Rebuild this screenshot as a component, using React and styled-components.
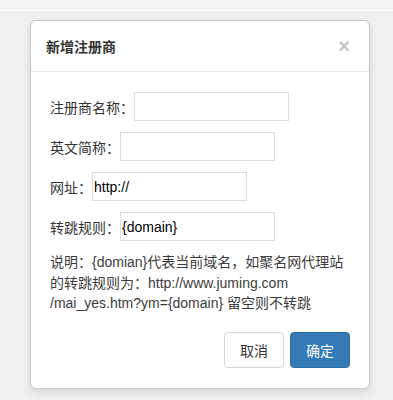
import React, { useState } from 'react'
import styled, { createGlobalStyle } from 'styled-components'

const GlobalStyle = createGlobalStyle`
  html, body {
    margin: 0;
    padding: 0;
    background: #f0f0f0;
    font-family: "Liberation Sans", "Noto Sans CJK SC", sans-serif;
    font-size: 14px;
    color: #333;
  }
`

const Page = styled.div`
  width: 393px;
  height: 400px;
  display: flex;
  flex-direction: column;
  overflow: hidden;
`

const TopStrip = styled.div`
  height: 10px;
  background: #f4f4f4;
  border-bottom: 1px solid #fbfbfb;
`

const Overlay = styled.div`
  flex: 1;
  padding: 9px 23px 0 30px;
`

const Modal = styled.div`
  width: 338px;
  background: #fff;
  border: 1px solid #c8c8c8;
  border-radius: 6px;
  box-shadow: 0 3px 9px rgba(0, 0, 0, 0.12);
`

const Header = styled.div`
  height: 50px;
  display: flex;
  align-items: center;
  justify-content: space-between;
  padding: 0 19px 0 15px;
  border-bottom: 1px solid #e5e5e5;
`

const Title = styled.h4`
  margin: 0;
  font-size: 14px;
  font-weight: bold;
  color: #333;
`

const Close = styled.button`
  border: 0;
  background: none;
  padding: 0;
  font-family: "Liberation Sans", sans-serif;
  font-size: 20px;
  font-weight: bold;
  line-height: 1;
  color: #c4c4c4;
  cursor: pointer;
`

const Body = styled.div`
  padding: 20px 19px 0 19px;
`

const Row = styled.div`
  display: flex;
  align-items: center;
  margin-bottom: 11px;
`

const Label = styled.label`
  white-space: nowrap;
  color: #333;
`

const Input = styled.input`
  box-sizing: border-box;
  width: 155px;
  height: 29px;
  padding: 1px 1px;
  border: 1px solid #dcdcdc;
  font-family: "Liberation Sans", "Noto Sans CJK SC", sans-serif;
  font-size: 14px;
  color: #000;
  outline: none;
`

const Note = styled.p`
  margin: 0;
  line-height: 20.5px;
  color: #3c3c3c;
  white-space: nowrap;
`

const Footer = styled.div`
  display: flex;
  justify-content: flex-end;
  gap: 6px;
  padding: 18px 19px 20px;
`

const Button = styled.button`
  box-sizing: border-box;
  height: 36px;
  padding: 0 15px;
  border-radius: 4px;
  font-family: "Liberation Sans", "Noto Sans CJK SC", sans-serif;
  font-size: 14px;
  cursor: pointer;
  border: 1px solid ${p => (p.$primary ? '#2e6da4' : '#d6d6d6')};
  background: ${p => (p.$primary ? '#337ab7' : '#fff')};
  color: ${p => (p.$primary ? '#fff' : '#333')};
`

const fields = [
  { label: '注册商名称：', value: '' },
  { label: '英文简称：', value: '' },
  { label: '网址：', value: 'http://' },
  { label: '转跳规则：', value: '{domain}' },
]

export default function App() {
  const [values, setValues] = useState(fields.map(f => f.value))

  const change = (i, v) => {
    const next = [...values]
    next[i] = v
    setValues(next)
  }

  return (
    <Page>
      <GlobalStyle />
      <TopStrip />
      <Overlay>
        <Modal>
          <Header>
            <Title>新增注册商</Title>
            <Close>×</Close>
          </Header>
          <Body>
            {fields.map((f, i) => (
              <Row key={f.label}>
                <Label>{f.label}</Label>
                <Input value={values[i]} onChange={e => change(i, e.target.value)} />
              </Row>
            ))}
            <Note>
              说明：{'{domian}'}代表当前域名，如聚名网代理站<br />
              的转跳规则为：http://www.juming.com<br />
              /mai_yes.htm?ym={'{domain}'} 留空则不转跳
            </Note>
          </Body>
          <Footer>
            <Button>取消</Button>
            <Button $primary>确定</Button>
          </Footer>
        </Modal>
      </Overlay>
    </Page>
  )
}
